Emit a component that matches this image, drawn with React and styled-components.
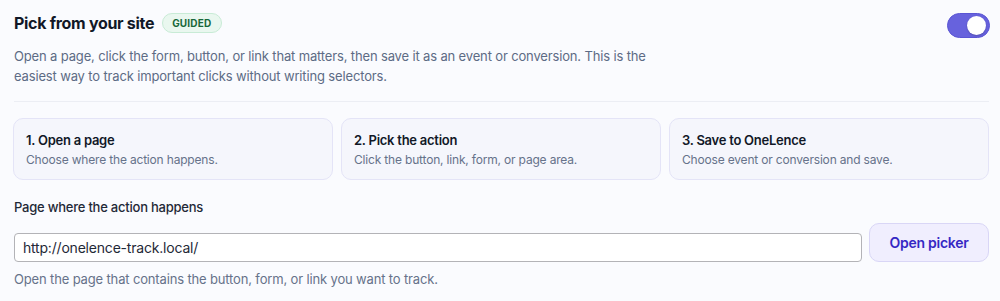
import React, { useState } from "react";
import styled, { createGlobalStyle } from "styled-components";

const Global = createGlobalStyle`
  html, body { margin: 0; padding: 0; background: #fafbfe; }
  body { font-family: Inter, "Noto Sans", sans-serif; color: #111827; }
  * { box-sizing: border-box; }
`;

const Panel = styled.section`
  padding: 13px 11px 0 13px;
  display: flex;
  flex-direction: column;
`;

const Header = styled.div`
  display: flex;
  align-items: flex-start;
  justify-content: space-between;
  height: 25px;
`;

const TitleGroup = styled.div`
  display: flex;
  align-items: center;
  gap: 8px;
  height: 20px;
  padding-left: 1px;
`;

const Title = styled.h2`
  margin: 0;
  font-size: 16px;
  line-height: 20px;
  font-weight: 700;
  letter-spacing: -0.3px;
  color: #111827;
`;

const Badge = styled.span`
  display: inline-flex;
  align-items: center;
  height: 20px;
  padding: 0 9px;
  border-radius: 999px;
  background: #e9f7ef;
  border: 1px solid #c8ebd6;
  color: #17683a;
  font-size: 10px;
  font-weight: 700;
  letter-spacing: 0.2px;
`;

const Toggle = styled.button`
  position: relative;
  width: 43px;
  height: 25px;
  border-radius: 999px;
  border: 1px solid #5a55d4;
  background: ${(p) => (p.$on ? "#6762dd" : "#d1d5db")};
  padding: 0;
  cursor: pointer;
  margin-right: -1px;
  &::after {
    content: "";
    position: absolute;
    top: 2px;
    left: ${(p) => (p.$on ? "19px" : "2px")};
    width: 19px;
    height: 19px;
    border-radius: 50%;
    background: #fff;
    box-shadow: 0 1px 2px rgba(0, 0, 0, 0.2);
  }
`;

const Description = styled.p`
  margin: 8px 0 0 1px;
  max-width: 660px;
  font-size: 13px;
  line-height: 20px;
  letter-spacing: -0.15px;
  color: #5d6b85;
`;

const Divider = styled.hr`
  margin: 15px 0 0 1px;
  border: 0;
  border-top: 1px solid #eceef4;
`;

const Steps = styled.div`
  margin-top: 16px;
  display: grid;
  grid-template-columns: repeat(3, 1fr);
  gap: 8px;
`;

const Step = styled.div`
  height: 62px;
  padding: 12px 12px 0 12px;
  border-radius: 10px;
  background: #f5f6fc;
  border: 1px solid #e4e4f7;
`;

const StepTitle = styled.div`
  font-size: 13px;
  font-weight: 600;
  line-height: 18px;
  letter-spacing: -0.25px;
  color: #111827;
`;

const StepText = styled.div`
  margin-top: 3px;
  font-size: 12px;
  line-height: 16px;
  letter-spacing: -0.18px;
  color: #66728a;
`;

const Label = styled.label`
  margin-top: 18px;
  margin-left: 1px;
  font-size: 13px;
  font-weight: 500;
  line-height: 18px;
  letter-spacing: -0.23px;
  color: #1f2937;
`;

const Row = styled.div`
  margin-top: 7px;
  display: flex;
  align-items: flex-end;
  gap: 7px;
`;

const Input = styled.input`
  flex: 1;
  min-width: 0;
  height: 29px;
  margin: 0 0 0 1px;
  padding: 0 8px;
  border: 1px solid #b3b3b7;
  border-radius: 4px;
  background: #fff;
  font-family: Inter, "Noto Sans", sans-serif;
  font-size: 14px;
  letter-spacing: -0.2px;
  color: #1f2937;
  outline: none;
`;

const PickerButton = styled.button`
  flex: none;
  width: 120px;
  height: 39px;
  margin: 0;
  border-radius: 10px;
  border: 1px solid #d9d6f6;
  background: #f0eefe;
  color: #3528c4;
  font-family: Inter, "Noto Sans", sans-serif;
  font-size: 14px;
  font-weight: 600;
  letter-spacing: -0.25px;
  cursor: pointer;
`;

const Help = styled.p`
  margin: 8px 0 0 1px;
  font-size: 13px;
  line-height: 18px;
  letter-spacing: -0.15px;
  color: #66728a;
`;

const steps = [
  { title: "1. Open a page", text: "Choose where the action happens." },
  { title: "2. Pick the action", text: "Click the button, link, form, or page area." },
  { title: "3. Save to OneLence", text: "Choose event or conversion and save." },
];

export default function App() {
  const [on, setOn] = useState(true);
  const [url, setUrl] = useState("http://onelence-track.local/");
  return (
    <>
      <Global />
      <Panel>
        <Header>
          <TitleGroup>
            <Title>Pick from your site</Title>
            <Badge>GUIDED</Badge>
          </TitleGroup>
          <Toggle $on={on} onClick={() => setOn(!on)} aria-label="Toggle" />
        </Header>
        <Description>
          Open a page, click the form, button, or link that matters, then save it as an event or
          conversion. This is the easiest way to track important clicks without writing selectors.
        </Description>
        <Divider />
        <Steps>
          {steps.map((s) => (
            <Step key={s.title}>
              <StepTitle>{s.title}</StepTitle>
              <StepText>{s.text}</StepText>
            </Step>
          ))}
        </Steps>
        <Label htmlFor="page-url">Page where the action happens</Label>
        <Row>
          <Input id="page-url" value={url} onChange={(e) => setUrl(e.target.value)} />
          <PickerButton>Open picker</PickerButton>
        </Row>
        <Help>Open the page that contains the button, form, or link you want to track.</Help>
      </Panel>
    </>
  );
}
